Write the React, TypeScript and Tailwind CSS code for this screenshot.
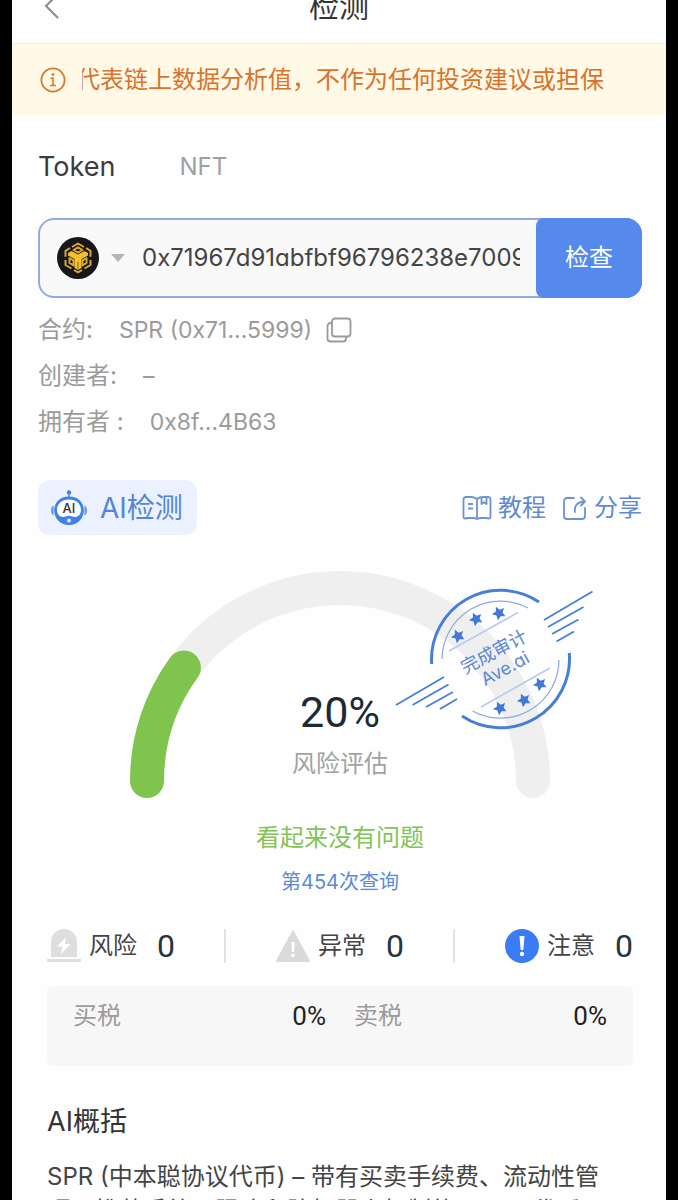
import { ReactNode, useState } from "react";

const STARS = [
  [458, 636],
  [476, 619],
  [499, 613],
  [500, 708],
  [524, 700],
  [540, 684],
];

const ChevronLeft = () => (
  <svg width="16" height="28" viewBox="0 0 16 28" fill="none" stroke="#8a8a8a" strokeWidth="2">
    <path d="M14 2 2 14l12 12" />
  </svg>
);

const InfoIcon = () => (
  <svg width="26" height="26" viewBox="0 0 26 26" fill="none" stroke="#d9782f" className="shrink-0">
    <circle cx="13" cy="13" r="11.6" strokeWidth="1.8" />
    <path d="M10.5 11H13v7M10 18.5h6" strokeWidth="1.6" />
    <circle cx="13" cy="7.6" r="1.4" fill="#d9782f" stroke="none" />
  </svg>
);

const BnbIcon = () => (
  <svg width="42" height="42" viewBox="0 0 42 42" className="shrink-0">
    <circle cx="21" cy="21" r="21" fill="#17161a" />
    <g fill="none" stroke="#d9a82e" strokeWidth="2" strokeLinejoin="round">
      <path d="m15 10 6-3.500 6 3.500M13 11l-4.500 2.800v6M29 11l4.500 2.800v6M8.500 23v5l6 3.500M33.500 23v5l-6 3.500M17 33l4 2.300 4-2.300" />
      <path d="m16.500 13 4.500-2.600 4.500 2.600-4.500 2.600z" />
      <path d="M12.500 21v5l4 2.400v-5zM29.500 21v5l-4 2.400v-5z" />
    </g>
    <path d="m11 16 3.500-2 6.500 3.600 6.500-3.600 3.500 2v2.500L24.500 22v9L21 33l-3.500-2v-9L11 18.500z" fill="#f5bf2e" />
    <path d="M21 25v8" stroke="#8a6a1c" strokeWidth="1" />
  </svg>
);

const CopyIcon = () => (
  <svg width="26" height="26" viewBox="0 0 26 26" fill="none" stroke="#9b9b9b" strokeWidth="1.8">
    <rect x="6" y="1.5" width="18.5" height="18" rx="3" />
    <path d="M6 6H4.500a3 3 0 0 0-3 3v12.500a3 3 0 0 0 3 3H17a3 3 0 0 0 3-3V20" />
  </svg>
);

const RobotIcon = () => (
  <svg width="38" height="38" viewBox="0 0 38 38">
    <circle cx="19" cy="3.500" r="2.200" fill="#4a80dc" />
    <path d="M19 4v5" stroke="#4a80dc" strokeWidth="1.500" />
    <path d="M3.600 16.500C1.800 17 1 19 1 21.500s.8 4.500 2.600 5zM34.400 16.500c1.800.5 2.600 2.500 2.600 5s-.8 4.500-2.600 5z" fill="#6c9ae8" />
    <path d="M19 7.500c9.500 0 14.800 6.500 14.800 14S28 36 19 36 4.200 29 4.200 21.500 9.500 7.500 19 7.500z" fill="#4180e4" />
    <path d="M19 10.500c7.500 0 12 4.500 12 10.500 0 4-2.500 7-6 7-2 0-3.500-1.300-6-1.300S15 28 13 28c-3.500 0-6-3-6-7 0-6 4.500-10.500 12-10.500z" fill="#fbfcff" />
    <text x="19" y="24" textAnchor="middle" fontSize="13" fontWeight="500" fill="#333">
      AI
    </text>
    <circle cx="19" cy="31.500" r="2" fill="#dce9ff" />
  </svg>
);

const BookIcon = () => (
  <svg width="30" height="26" viewBox="0 0 30 26" fill="none" stroke="#6c93d6" strokeWidth="1.8" strokeLinejoin="round">
    <path d="M15 4c-2-1.500-3.500-2-6-2H4a2.500 2.500 0 0 0-2.500 2.500V22c0 1 .8 1.500 1.500 1.500l3-.5h5c2 0 3 .5 4 1 1-.5 2-1 4-1h5l3 .5c.8 0 1.500-.5 1.500-1.500V4.500A2.500 2.500 0 0 0 26 2h-5c-2.500 0-4 .5-6 2zM15 4v20" />
    <path d="M6 9h5M6 13.500h5M19.500 2v7l2.500-1.800L24.500 9V2" />
  </svg>
);

const ShareIcon = () => (
  <svg width="26" height="26" viewBox="0 0 26 26" fill="none" stroke="#6c93d6" strokeWidth="1.8" strokeLinecap="round" strokeLinejoin="round">
    <path d="M12 3H5a3 3 0 0 0-3 3v15a3 3 0 0 0 3 3h15a3 3 0 0 0 3-3v-8" />
    <path d="M13 17c-1-6 2-10 9.500-10.500M19 2.500l4 4-4 4" />
  </svg>
);

const SirenIcon = () => (
  <svg width="34" height="36" viewBox="0 0 34 36" fill="#dedede">
    <path d="M4 29V14a13 13 0 0 1 26 0v15zM0 31h34v3H0z" />
    <path d="m19 9-9 9.500h5.500L14 26l9.500-10H18z" fill="#fff" />
  </svg>
);

const WarningIcon = () => (
  <svg width="34" height="36" viewBox="0 0 34 36">
    <path d="M17 3.500 33 33H1z" fill="#dadada" stroke="#dadada" strokeWidth="2" strokeLinejoin="round" />
    <path d="M15.200 14h3.600l-.8 10h-2z" fill="#fff" />
    <circle cx="17" cy="27.5" r="1.8" fill="#fff" />
  </svg>
);

const NoticeIcon = () => (
  <svg width="34" height="36" viewBox="0 0 34 36">
    <circle cx="17" cy="18" r="17" fill="#3b7cf4" />
    <path d="M14.500 8h5l-1.200 14h-2.600z" fill="#fff" />
    <circle cx="17" cy="26" r="2.200" fill="#fff" />
  </svg>
);

const Gauge = () => (
  <svg
    width="508"
    height="230"
    viewBox="86 570 508 230"
    fill="none"
    className="col-start-1 row-start-1"
  >
    <path d="M147 781a193 193 0 0 1 386 0" stroke="#efefef" strokeWidth="34" strokeLinecap="round" />
    <path d="M147 781a193 193 0 0 1 36.900-113.400" stroke="#7fc44d" strokeWidth="34" strokeLinecap="round" />
    <g stroke="#477fd6">
      <path d="M431.700 664A69 69 0 0 1 539 602M569.300 653A69 69 0 0 1 462 716" strokeWidth="3" />
      <path d="M442 659A58.500 58.500 0 0 1 528 608M559 660A58.500 58.500 0 0 1 472.500 711" stroke="#8ba9dc" strokeWidth="1.200" />
      <path d="m449 651 69-38.500M481 707l69-39" stroke="#b7cbee" strokeWidth="1.600" />
      <path
        d="m544 620 48.500-28.500M548 627l35.500-20M552 634l26.500-14.500M556.500 641.500 574 631.500M396 705l48-28M412.500 705l36-20.500M426 707l27-15M440 709l17-10"
        strokeWidth="1.800"
      />
    </g>
    {STARS.map(([x, y]) => (
      <path
        key={`${x}-${y}`}
        transform={`translate(${x} ${y}) rotate(-27)`}
        d="m0-7 2.100 4.300 4.700.6-3.400 3.300.8 4.700L0 3.700l-4.200 2.200.8-4.700-3.400-3.300 4.700-.6z"
        fill="#4179d8"
      />
    ))}
    <g transform="translate(500 659) rotate(-28)" fill="#5c89d2" textAnchor="middle">
      <text x="-2" y="-3" fontSize="18">
        完成审计
      </text>
      <text x="0" y="17" fontSize="18">
        Ave.ai
      </text>
    </g>
  </svg>
);

const InfoRow = ({ label, children }: { label: string; children: ReactNode }) => (
  <div className="flex h-[46px] items-center text-[#9b9b9b]">
    <dt className="text-2xl">{label}</dt>
    <dd className="ml-[26px] flex items-center gap-3.5 text-[23px] leading-8">{children}</dd>
  </div>
);

const Stat = ({ icon, label, value }: { icon: ReactNode; label: string; value: number }) => (
  <div className="flex items-center gap-2">
    {icon}
    <span className="text-2xl text-[#444]">{label}</span>
    <span className="ml-3 font-['Roboto'] text-[32px] leading-8 text-[#26343c]">{value}</span>
  </div>
);

const Tax = ({ label, value }: { label: string; value: string }) => (
  <div className="flex items-center justify-between">
    <dt className="text-2xl text-[#9b9b9b]">{label}</dt>
    <dd className="font-['Roboto'] text-[26px] leading-8 text-[#222]">{value}</dd>
  </div>
);

const App = () => {
  const [address, setAddress] = useState("0x71967d91abfbf96796238e70095999");

  return (
    <div className="h-screen overflow-hidden bg-black px-3 font-['Inter','Noto_Sans_CJK_SC',sans-serif] [font-feature-settings:'cv11']">
      <main className="-mt-8 min-h-full bg-[#fefefe] pb-8">
        <header className="grid h-[76px] grid-cols-[1fr_auto_1fr] items-center border-b border-[#f3ebe6] px-8">
          <button type="button" aria-label="返回" className="justify-self-start">
            <ChevronLeft />
          </button>
          <h1 className="text-[30px] leading-9 text-[#333]">检测</h1>
        </header>

        <div className="flex h-[71px] items-center gap-4 bg-[#fff9e6] pl-7 pr-[62px]">
          <InfoIcon />
          <p className="flex grow justify-end overflow-hidden whitespace-nowrap text-2xl text-[#d9722b]">
            代表链上数据分析值，不作为任何投资建议或担保
          </p>
        </div>

        <div className="pl-[26px] pr-6">
          <nav className="flex h-[103px] items-center gap-16">
            <button type="button" className="text-[27px] leading-8 text-[#3c3c3c]">
              Token
            </button>
            <button type="button" className="text-2xl text-[#9fa0a6]">
              NFT
            </button>
          </nav>

          <form
            className="flex h-20 rounded-2xl border-2 border-[#8eaee3] bg-[#f9f9fa]"
            onSubmit={(e) => e.preventDefault()}
          >
            <button
              type="button"
              aria-label="BNB Chain"
              aria-haspopup="listbox"
              className="flex items-center gap-3 px-[17px]"
            >
              <BnbIcon />
              <svg width="14" height="8" viewBox="0 0 14 8" fill="#b5b5b5">
                <path d="M0 0h14L7 8z" />
              </svg>
            </button>
            <input
              type="text"
              aria-label="合约地址"
              value={address}
              onChange={(e) => setAddress(e.target.value)}
              className="mr-4 w-0 grow bg-transparent text-2xl text-[#444] outline-none"
            />
            <button
              type="submit"
              className="-my-0.5 -mr-0.5 w-[106px] rounded-l-lg rounded-r-2xl bg-[#5589ec] text-2xl text-white"
            >
              检查
            </button>
          </form>

          <dl className="mt-[9px]">
            <InfoRow label="合约:">
              <span>SPR (0x71...5999)</span>
              <button type="button" aria-label="复制">
                <CopyIcon />
              </button>
            </InfoRow>
            <InfoRow label="创建者:">–</InfoRow>
            <InfoRow label="拥有者 :">0x8f...4B63</InfoRow>
          </dl>

          <div className="mt-[35px] flex h-[55px] items-center justify-between">
            <button
              type="button"
              className="flex h-full items-center gap-3 rounded-xl bg-[#ebf1fe] px-3.5 pl-3 text-[28px] leading-8 text-[#5485d6]"
            >
              <RobotIcon />
              AI检测
            </button>
            <div className="flex gap-4 text-2xl text-[#6089cf]">
              <a href="#guide" className="flex items-center gap-1.5">
                <BookIcon />
                教程
              </a>
              <a href="#share" className="flex items-center gap-1.5">
                <ShareIcon />
                分享
              </a>
            </div>
          </div>
        </div>

        <section className="mt-[35px] flex flex-col items-center pl-0.5">
          <div className="grid justify-items-center">
            <Gauge />
            <div className="col-start-1 row-start-1 flex flex-col items-center self-end pb-[18px]">
              <p className="font-['Roboto'] text-[43px] leading-[52px] text-[#1d2a33]">20%</p>
              <p className="mt-2 text-2xl leading-9 text-[#a2a2a2]">风险评估</p>
            </div>
          </div>
          <p className="mt-5 text-2xl leading-9 text-[#82c455]">看起来没有问题</p>
          <p className="mt-2 text-xl leading-9 text-[#5b8ad8]">第454次查询</p>
        </section>

        <section className="pl-[35px] pr-[33px]">
          <div className="mt-7 flex items-center justify-between">
            <Stat icon={<SirenIcon />} label="风险" value={0} />
            <div className="h-[34px] w-0.5 bg-[#e2e2e2]" />
            <Stat icon={<WarningIcon />} label="异常" value={0} />
            <div className="h-[34px] w-0.5 bg-[#e2e2e2]" />
            <Stat icon={<NoticeIcon />} label="注意" value={0} />
          </div>

          <dl className="mt-[22px] grid h-20 grid-cols-2 content-start gap-7 rounded-md bg-[#f7f7f7] px-[26px] pt-3.5">
            <Tax label="买税" value="0%" />
            <Tax label="卖税" value="0%" />
          </dl>

          <h2 className="mt-9 text-[27px] leading-10 text-[#333]">AI概括</h2>
          <p className="mt-[18px] text-2xl leading-[34px] text-[#444]">
            SPR (中本聪协议代币) – 带有买卖手续费、流动性管理、推荐系统、限购和防机器人机制的ERC20代币。
          </p>
        </section>
      </main>
    </div>
  );
};

export default App;
